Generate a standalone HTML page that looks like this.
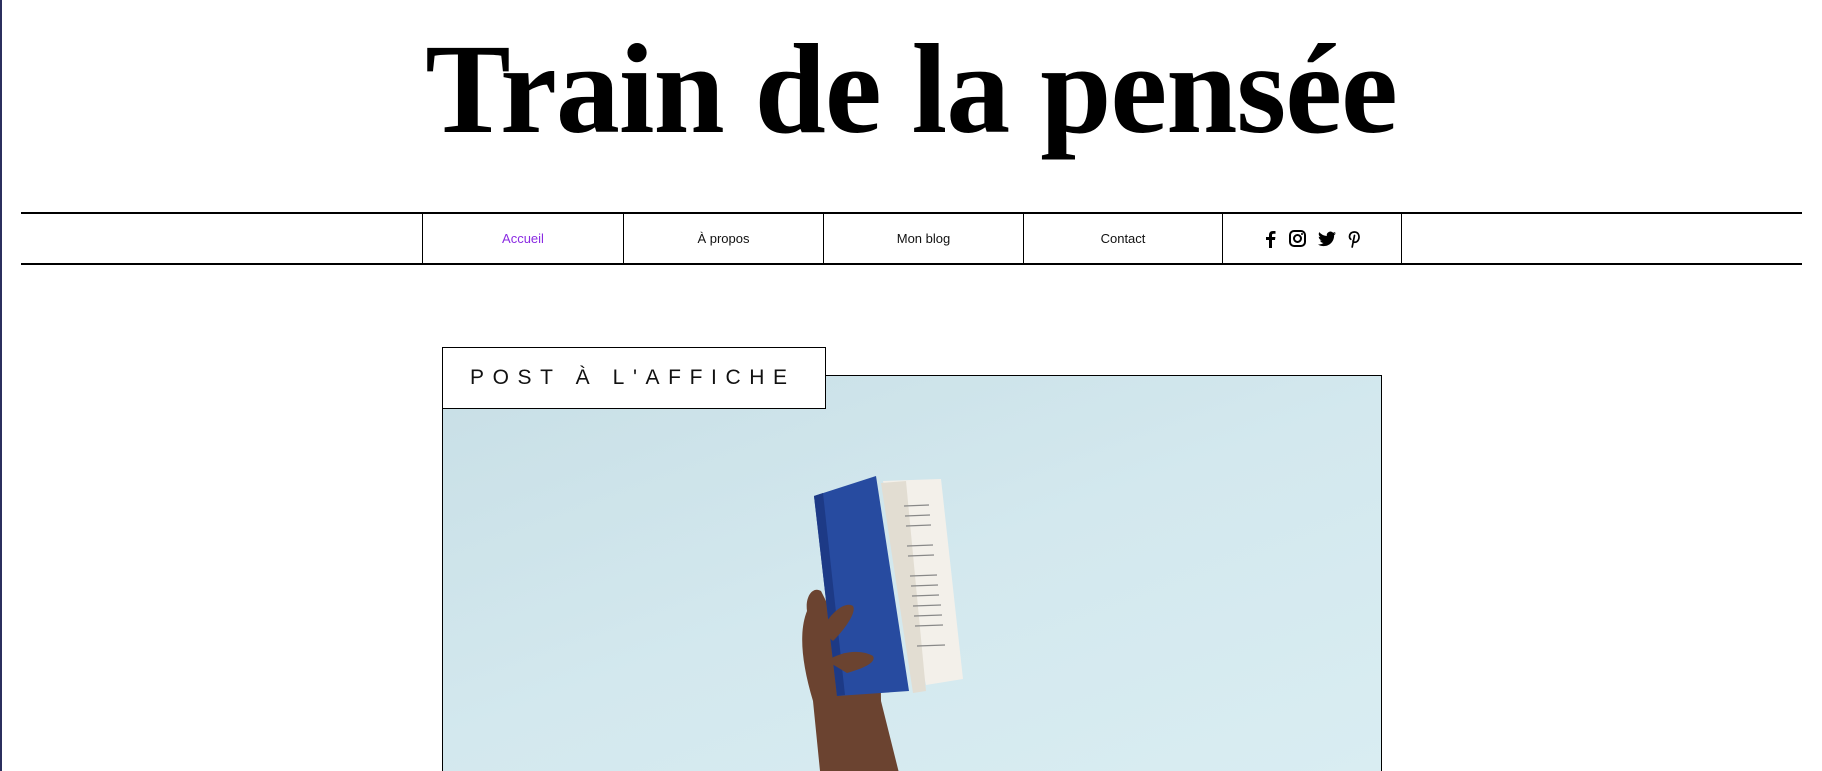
<!DOCTYPE html>
<html><head><meta charset="utf-8"><style>
*{margin:0;padding:0;box-sizing:border-box}
html,body{width:1822px;height:771px;overflow:hidden}
body{background:#fff;position:relative;font-family:"Liberation Sans",sans-serif}
.lb{position:absolute;left:0;top:0;width:2px;height:771px;background:#2b2f5e}
h1{position:absolute;left:0;width:1822px;top:14px;text-align:center;font-family:"Liberation Serif",serif;font-weight:bold;font-size:128px;line-height:150px;letter-spacing:-1px;color:#000}
.hl{position:absolute;left:21px;width:1781px;height:2px;background:#000}
.cell{position:absolute;top:213px;height:51px;border-left:1px solid #000;font-size:13px;color:#111;display:flex;align-items:center;justify-content:center}
.lbl{position:absolute;left:442px;top:347px;width:384px;height:62px;border:1px solid #000;background:#fff;z-index:2;font-size:21px;letter-spacing:8.6px;color:#111;padding-left:27px;line-height:60px}
.img{position:absolute;left:442px;top:375px;width:940px;height:396px;border:1px solid #000;border-bottom:none;background:linear-gradient(160deg,#c8dfe6 0%,#d3e8ee 50%,#d9edf2 100%);overflow:hidden}
</style></head><body>
<div class="lb"></div>
<h1>Train de la pensée</h1>
<div class="hl" style="top:212px"></div>
<div class="hl" style="top:263px"></div>
<div class="cell" style="left:422px;width:201px;color:#8a2be2">Accueil</div>
<div class="cell" style="left:623px;width:200px">À propos</div>
<div class="cell" style="left:823px;width:200px">Mon blog</div>
<div class="cell" style="left:1023px;width:199px">Contact</div>
<div class="cell" style="left:1222px;width:179px;gap:12px">
<svg width="14" height="18" viewBox="0 0 14 18"><path d="M9 18V10h3l.4-3H9V5.2c0-.9.3-1.4 1.5-1.4H12.5V1.1C12 1 11 1 10 1 7.6 1 6 2.4 6 5v2H3v3h3v8z" fill="#000"/></svg>
<svg width="17" height="17" viewBox="0 0 17 17"><rect x="1" y="1" width="15" height="15" rx="4" fill="none" stroke="#000" stroke-width="2"/><circle cx="8.5" cy="8.5" r="3.5" fill="none" stroke="#000" stroke-width="2"/><circle cx="13" cy="4" r="1" fill="#000"/></svg>
<svg width="18" height="16" viewBox="0 0 24 20"><path d="M24 2.4a9.8 9.8 0 01-2.8.8A4.9 4.9 0 0023.3.5a9.9 9.9 0 01-3.1 1.2A4.9 4.9 0 0011.8 6 14 14 0 011.7.9a4.9 4.9 0 001.5 6.6A4.9 4.9 0 011 6.9a4.9 4.9 0 003.9 4.9 4.9 4.9 0 01-2.2.1 4.9 4.9 0 004.6 3.4A9.9 9.9 0 010 17.3 14 14 0 007.5 19.5c9.1 0 14-7.5 14-14v-.6A10 10 0 0024 2.4z" fill="#000"/></svg>
<svg width="13" height="18" viewBox="0 0 13 18"><path d="M5 11C5.5 13 9 12.5 10.3 10 11.8 7 11 2 6.5 2 2.8 2 1.5 4.5 1.5 6.5c0 1.3.5 2.3 1.3 2.7" fill="none" stroke="#000" stroke-width="1.7" stroke-linecap="round"/><path d="M6.5 5.5L4.2 17" stroke="#000" stroke-width="1.7" stroke-linecap="round"/></svg>
</div>
<div class="cell" style="left:1401px;width:1px"></div>
<div class="lbl">POST À L'AFFICHE</div>
<div class="img">
<svg width="940" height="400" viewBox="442 375 940 400" style="position:absolute;left:0;top:0">
<path d="M812 700 C 800 660 798 630 806 610 C 804 595 812 585 820 590 L 830 610 L 866 612 C 878 620 880 650 880 700 L 900 780 L 820 780 Z" fill="#6b4330"/>
<polygon points="882,480 940,478 962,678 925,684" fill="#f3f0ea"/>
<polygon points="880,482 905,480 925,690 912,692" fill="#e2ddd2"/>
<g stroke="#888" stroke-width="1.2"><line x1="903" y1="505" x2="928" y2="504"/><line x1="904" y1="515" x2="929" y2="514"/><line x1="905" y1="525" x2="930" y2="524"/><line x1="906" y1="545" x2="932" y2="544"/><line x1="907" y1="555" x2="933" y2="554"/><line x1="909" y1="575" x2="936" y2="574"/><line x1="910" y1="585" x2="937" y2="584"/><line x1="911" y1="595" x2="938" y2="594"/><line x1="912" y1="605" x2="940" y2="604"/><line x1="913" y1="615" x2="941" y2="614"/><line x1="914" y1="625" x2="942" y2="624"/><line x1="916" y1="645" x2="944" y2="644"/></g>
<polygon points="813,495 875,475 908,690 836,695" fill="#274ba0"/>
<polygon points="813,495 822,492 844,694 836,695" fill="#1d3a86"/>
<path d="M826 660 C 840 650 860 648 872 655 C 876 662 860 668 846 672 Z" fill="#6b4330"/>
<path d="M820 630 C 830 610 845 600 852 605 C 856 612 842 630 832 640 Z" fill="#6b4330"/>
</svg>
</div>
</body></html>
